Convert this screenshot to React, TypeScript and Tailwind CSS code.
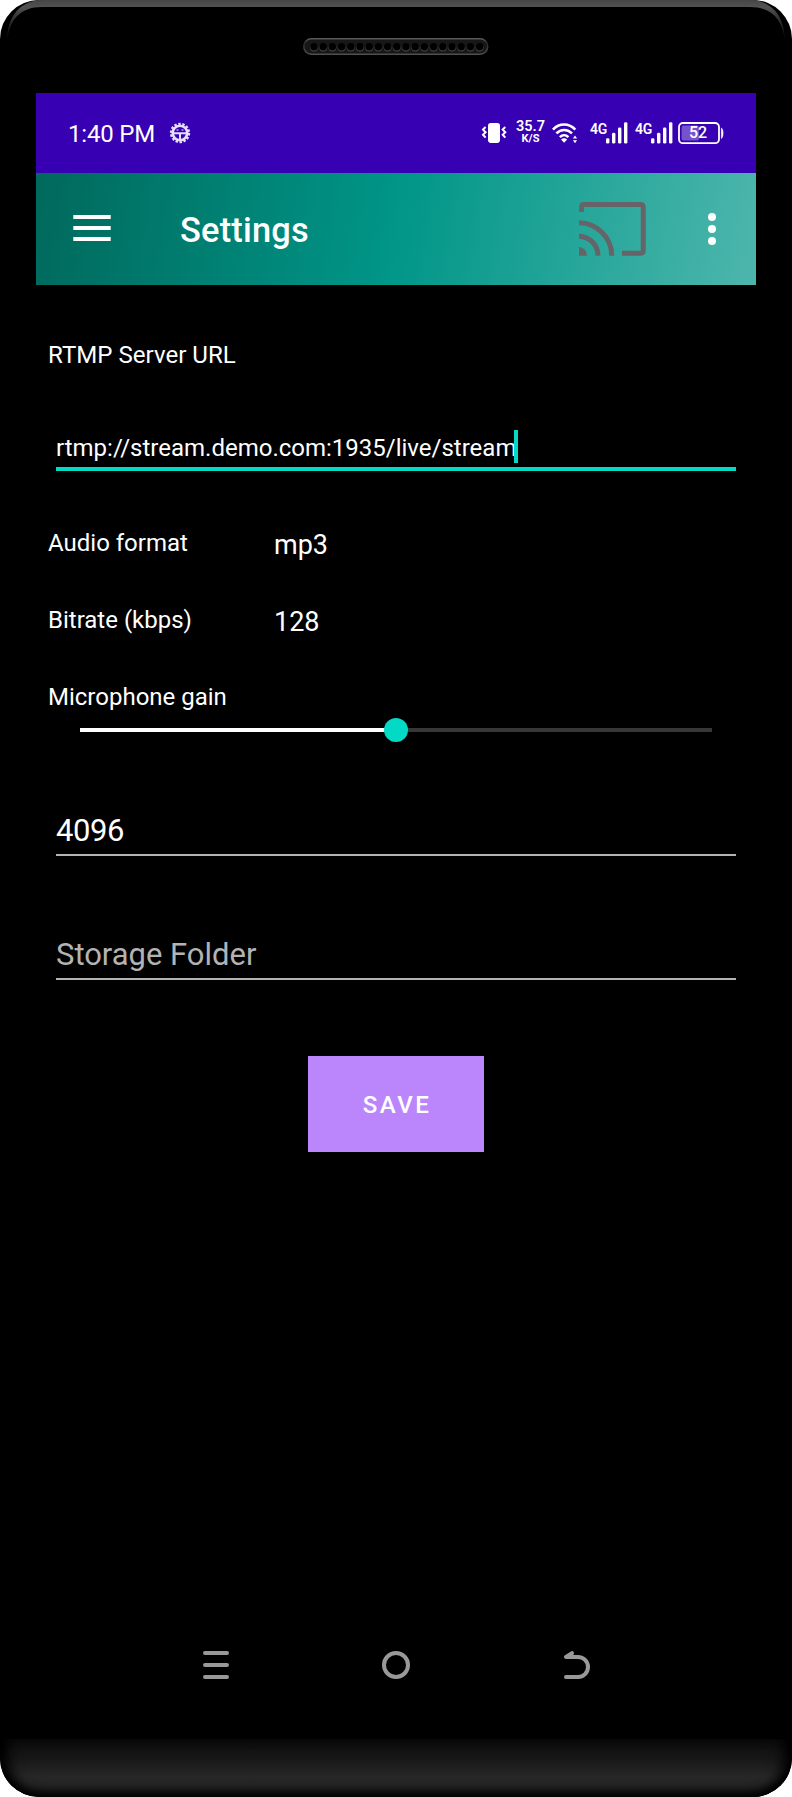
import { useState } from "react";

const speakerHoles = Array.from({ length: 19 }, (_, i) => 11 + i * 9.2);

const Bezel = () => (
  <svg className="absolute left-0 top-0" width="792" height="60" viewBox="0 0 792 60">
    <defs>
      <linearGradient id="edge" x1="0" y1="0" x2="0" y2="42" gradientUnits="userSpaceOnUse">
        <stop offset="0" stopColor="#464646" />
        <stop offset="0.17" stopColor="#525252" />
        <stop offset="0.5" stopColor="#2c2c2c" />
        <stop offset="1" stopColor="#000" />
      </linearGradient>
    </defs>
    <path
      d="M38 0H754C774 3 785 18 785 42C783 20 772 7 750 7H42C20 7 9 20 7 42C7 18 18 3 38 0Z"
      fill="url(#edge)"
    />
  </svg>
);

const Speaker = () => (
  <svg width="186" height="17" viewBox="0 0 186 17">
    <defs>
      <linearGradient id="rim" x1="0" y1="0" x2="0" y2="1">
        <stop offset="0" stopColor="#5a5a5a" />
        <stop offset="0.3" stopColor="#2a2a2a" />
        <stop offset="1" stopColor="#505050" />
      </linearGradient>
    </defs>
    <rect x="0.75" y="0.75" width="184" height="15.5" rx="7.75" fill="#171717" stroke="url(#rim)" strokeWidth="1.5" />
    {speakerHoles.map((x) => (
      <g key={x}>
        <circle cx={x} cy="9.6" r="3.9" fill="#4a4a4a" />
        <circle cx={x} cy="8.7" r="3.7" fill="#000" />
      </g>
    ))}
  </svg>
);

const GearIcon = () => (
  <svg className="ml-[15px]" width="22" height="22" viewBox="0 0 22 22" fill="none" stroke="#e6defa">
    <circle cx="11" cy="11" r="7.3" strokeWidth="2.6" />
    <circle cx="11" cy="11" r="9" strokeWidth="2.4" strokeDasharray="2.4 1.64" />
    <path d="M4 11.2H18" strokeWidth="2" />
    <path d="M11 11.5V18" strokeWidth="2" />
    <path d="M7.5 8H9.5M12.5 8H14.5" strokeWidth="1.4" opacity="0.7" />
  </svg>
);

const VibrateIcon = () => (
  <svg width="26" height="22" viewBox="0 0 26 22" fill="none" stroke="#fff" strokeWidth="2">
    <rect x="7" y="0.9" width="12" height="20" rx="2.8" fill="#fff" stroke="none" />
    <path d="M4.6 5L2 7.6L4.6 10.2L2 12.8L4.6 15.6" />
    <path d="M21.4 5L24 7.6L21.4 10.2L24 12.8L21.4 15.6" transform="translate(46 0) scale(-1 1) translate(0.3 0)" />
  </svg>
);

const WifiIcon = () => (
  <svg width="26" height="22" viewBox="0 0 26 22" fill="none" stroke="#fff" strokeWidth="2.6">
    <path d="M0.9 7.6C7 0.8 17.2 0.8 23.3 7.6" />
    <path d="M4.4 11.4C8.8 6.8 15.6 6.8 20 11.4" />
    <path d="M7.9 15.1C10.4 12.6 13.9 12.6 16.4 15.1" />
    <path d="M12.1 20.8L9 17.4C10.8 16 13.4 16 15.2 17.4Z" fill="#fff" stroke="none" />
    <path d="M20.9 16.6L23 13.6L25.1 16.6ZM20.9 18.2L23 21.2L25.1 18.2Z" fill="#fff" stroke="none" />
  </svg>
);

const Signal = () => (
  <div className="flex w-[45px]">
    <span className="mt-[2px] h-[14px] w-[16px] text-[14px] font-semibold leading-[10px] tracking-[-0.3px]">4G</span>
    <svg width="22" height="22" viewBox="0 0 22 22" fill="#fff">
      <rect x="0" y="16.2" width="3.4" height="5.4" rx="1.4" />
      <rect x="6" y="10.8" width="3.4" height="10.8" rx="1.4" />
      <rect x="12" y="5.5" width="3.4" height="16.1" rx="1.4" />
      <rect x="18" y="0.2" width="3.4" height="21.4" rx="1.4" />
    </svg>
  </div>
);

const Battery = () => (
  <div className="relative h-[22px] w-[47px]">
    <svg width="47" height="22" viewBox="0 0 47 22">
      <rect x="1" y="1" width="40" height="20.2" rx="4" fill="none" stroke="#fff" strokeWidth="1.8" />
      <rect x="3.6" y="3.6" width="17.5" height="15" rx="2" fill="#fff" opacity="0.32" />
      <path d="M43.4 6C45.6 7 45.6 15.4 43.4 16.4Z" fill="#fff" stroke="#fff" strokeWidth="0.6" />
    </svg>
    <span className="absolute left-[11px] top-[2px] text-[16px] font-medium leading-[18px]">52</span>
  </div>
);

const StatusBar = () => (
  <div className="flex h-[80px] items-center bg-[#3700b3] pl-[32px] text-white">
    <span className="mt-px w-[86px] whitespace-nowrap text-[24px] leading-[28px] tracking-[-0.2px]">1:40 PM</span>
    <GearIcon />
    <div className="ml-auto mr-[31px] flex items-start">
      <VibrateIcon />
      <div className="-mt-[3px] ml-[9px] flex w-[29px] flex-col items-center font-semibold">
        <span className="text-[14.5px] leading-[15px]">35.7</span>
        <span className="text-[11px] font-bold leading-[9px]">K/S</span>
      </div>
      <div className="ml-[7px] mr-[12px]">
        <WifiIcon />
      </div>
      <Signal />
      <Signal />
      <div className="-ml-[2px]">
        <Battery />
      </div>
    </div>
  </div>
);

const AppBar = () => (
  <div className="flex h-[112px] items-center bg-[linear-gradient(98.84deg,#00695c,#009688_50%,#4db6ac)] text-white">
    <svg className="mb-[2px] ml-[37px]" width="38" height="26" viewBox="0 0 38 26" fill="#fff">
      <path d="M0.3 0H37.7V4H0.3ZM0.3 11H37.7V15H0.3ZM0.3 22H37.7V26H0.3Z" />
    </svg>
    <h1 className="mt-[2px] ml-[69px] text-[34.4px] font-medium leading-[40px] tracking-[0.2px]">Settings</h1>
    <svg className="ml-auto" width="67" height="54" viewBox="0 0 67 54" fill="none" stroke="#646469" strokeWidth="5">
      <path d="M2.5 10V5Q2.5 2.5 5 2.5H61.5Q64.2 2.5 64.2 5V48.5Q64.2 51.2 61.5 51.2H43" />
      <path d="M0 20.7A33 33 0 0 1 32.7 53.7" />
      <path d="M0 34.2A19.5 19.5 0 0 1 19 53.7" />
      <path d="M0 45A8 8.7 0 0 1 8 53.7H0Z" fill="#646469" stroke="none" />
    </svg>
    <svg className="ml-[62px] mr-[40px]" width="8" height="32" viewBox="0 0 8 32" fill="#fff">
      <circle cx="4" cy="4" r="4" />
      <circle cx="4" cy="16" r="4" />
      <circle cx="4" cy="28" r="4" />
    </svg>
  </div>
);

interface OptionRowProps {
  label: string;
  value: string;
}

const OptionRow = ({ label, value }: OptionRowProps) => (
  <div className="flex h-[77px] items-start pl-[12px]">
    <span className="mt-px w-[226px] text-[24px] leading-[28px]">{label}</span>
    <span className="mt-px text-[27px] leading-[32px]">{value}</span>
  </div>
);

const NavBar = () => (
  <div className="mx-auto flex w-[388px] items-center justify-between">
    <svg width="28" height="28" viewBox="0 0 28 28" stroke="#999" strokeWidth="4" strokeLinecap="round">
      <path d="M3 2H25M3 14H25M3 26H25" />
    </svg>
    <svg width="28" height="28" viewBox="0 0 28 28" fill="none" stroke="#999" strokeWidth="4">
      <circle cx="14" cy="14" r="12" />
    </svg>
    <svg
      width="28"
      height="28"
      viewBox="0 0 28 28"
      fill="none"
      stroke="#999"
      strokeWidth="4"
      strokeLinecap="round"
      strokeLinejoin="round"
    >
      <path d="M10 2.2L4 6H16A10 10 0 0 1 16 26H4" />
    </svg>
  </div>
);

export default function App() {
  const [gain] = useState(50);

  return (
    <div className="h-[1797px] w-[792px] bg-white font-['Roboto',sans-serif]">
      <div className="relative flex h-full w-full flex-col overflow-hidden rounded-[39px] bg-black">
        <Bezel />
        <div className="flex h-[93px] shrink-0 justify-center pt-[38px]">
          <Speaker />
        </div>

        <div className="mx-[36px] flex h-[1646px] flex-col text-white">
          <StatusBar />
          <AppBar />

          <div className="mt-[56px] pl-[12px] text-[24.08px] leading-[28px]">RTMP Server URL</div>

          <div className="mx-[20px] mt-[61px] flex h-[41px] border-b-4 border-[#03dac5]">
            <span className="mt-[4px] whitespace-nowrap text-[24px] leading-[28px]">
              rtmp://stream.demo.com:1935/live/stream
            </span>
            <span className="-ml-[2px] h-[33px] w-[4px] bg-[#03dac5]" />
          </div>

          <div className="mt-[57px]">
            <OptionRow label="Audio format" value="mp3" />
            <OptionRow label="Bitrate (kbps)" value="128" />
          </div>

          <div className="mt-px pl-[12px] text-[24px] leading-[28px]">Microphone gain</div>
          <div className="relative mx-[44px] mt-[7px] flex h-[24px] items-center">
            <div className="h-[4px] w-full bg-[#373737]">
              <div className="h-full bg-white" style={{ width: `${gain}%` }} />
            </div>
            <div
              className="absolute size-[24px] -translate-x-1/2 rounded-full bg-[#03dac5]"
              style={{ left: `${gain}%` }}
            />
          </div>

          <div className="mx-[20px] mt-[71px] h-[43px] border-b-2 border-[#b3b3b3] text-[30.96px] leading-[36px] tracking-[-0.4px]">
            4096
          </div>
          <div className="mx-[20px] mt-[81px] h-[43px] border-b-2 border-[#b3b3b3] text-[30.96px] leading-[36px] text-[#b3b3b3]">
            Storage Folder
          </div>

          <button className="mt-[76px] h-[96px] w-[176px] self-center bg-[#bb86fc] pl-[2px] pt-[2px] text-[24.08px] font-medium leading-[28px] tracking-[2.4px]">
            SAVE
          </button>

          <div className="mt-auto mb-[60px]">
            <NavBar />
          </div>
        </div>

        <div className="h-[58px] shrink-0 rounded-b-[39px] bg-[linear-gradient(to_bottom,#0b0b0b,#181818_35%,#272727_65%,#262626_75%)] shadow-[inset_0_-10px_10px_-4px_#000,inset_14px_0_14px_-6px_#000,inset_-14px_0_14px_-6px_#000]" />
      </div>
    </div>
  );
}
